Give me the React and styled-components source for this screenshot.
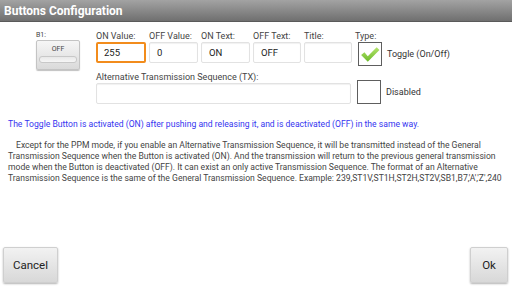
import styled, { createGlobalStyle } from "styled-components";

const GlobalStyle = createGlobalStyle`
  html, body {
    margin: 0;
    padding: 0;
    background: #fff;
    font-family: Roboto, "Noto Sans", sans-serif;
  }
  #root {
    height: 287px;
  }
`;

const Page = styled.div`
  width: 512px;
  height: 287px;
  display: flex;
  flex-direction: column;
  background: #fff;
  overflow: hidden;
`;

const Header = styled.div`
  height: 21px;
  display: flex;
  align-items: center;
  padding-left: 4px;
  background: linear-gradient(#a3a3a3, #6f6f6f);
  border-bottom: 1px solid #5a5a5a;
  color: #fff;
  font-size: 12px;
  font-weight: bold;
`;

const Top = styled.div`
  display: flex;
  padding: 9px 0 0 36px;
`;

const ButtonPreview = styled.div`
  width: 46px;
  display: flex;
  flex-direction: column;
  margin-right: 14px;
`;

const SmallLabel = styled.div`
  font-size: 7px;
  color: #444;
  line-height: 8px;
`;

const OffButton = styled.div`
  margin-top: 1px;
  width: 44px;
  height: 30px;
  box-sizing: border-box;
  border: 1px solid #c4c4c4;
  border-radius: 2px;
  background: linear-gradient(#f6f6f6, #dadada);
  box-shadow: 0 1px 1px rgba(0, 0, 0, 0.25);
  display: flex;
  flex-direction: column;
  align-items: center;
  padding-top: 4px;
  font-size: 7px;
  color: #444;
`;

const Pill = styled.div`
  margin-top: 3px;
  width: 36px;
  height: 5px;
  border-radius: 3px;
  border: 1px solid #c8c8c8;
  background: linear-gradient(#e8e8e8, #f6f6f6);
`;

const Form = styled.div`
  display: flex;
  flex-direction: column;
  gap: 6px;
`;

const Row = styled.div`
  display: flex;
  align-items: ${(p) => p.$align || "flex-end"};
  gap: 3px;
`;

const Field = styled.div`
  display: flex;
  flex-direction: column;
  width: ${(p) => p.$w}px;
`;

const Label = styled.div`
  font-size: 9px;
  color: #444;
  line-height: 10px;
  margin-bottom: 1px;
  white-space: nowrap;
`;

const Input = styled.div`
  height: 21px;
  box-sizing: border-box;
  border: ${(p) => (p.$active ? "2px solid #f28c1c" : "1px solid #e2e2e2")};
  border-radius: 2px;
  box-shadow: ${(p) => (p.$active ? "none" : "inset 0 1px 1px rgba(0,0,0,0.06)")};
  padding-left: ${(p) => (p.$active ? 6 : 7)}px;
  display: flex;
  align-items: center;
  font-size: 9.5px;
  color: #222;
`;

const TypeBox = styled.div`
  display: flex;
  align-items: center;
  margin-left: 3px;
`;

const Check = styled.div`
  width: 24px;
  height: 24px;
  box-sizing: border-box;
  border: 1px solid #5e5e5e;
  background: #fff;
  display: flex;
  align-items: center;
  justify-content: center;
`;

const CheckText = styled.div`
  margin-left: 5px;
  font-size: 9px;
  color: #333;
`;

const Note = styled.div`
  margin: 15px 0 0 8px;
  font-size: 8.6px;
  color: #3535f0;
  line-height: 11px;
`;

const Paragraph = styled.p`
  margin: 10px 0 0 8px;
  width: 500px;
  font-size: 8.6px;
  line-height: 11px;
  color: #444;
  text-indent: 8px;
`;

const Footer = styled.div`
  margin-top: auto;
  display: flex;
  justify-content: space-between;
  padding: 0 4px 4px 3px;
`;

const FooterButton = styled.div`
  width: ${(p) => p.$w}px;
  height: 36px;
  box-sizing: border-box;
  border: 1px solid #cfcfcf;
  border-radius: 2px;
  background: linear-gradient(#f2f2f2, #d8d8d8);
  box-shadow: 0 1px 2px rgba(0, 0, 0, 0.3);
  display: flex;
  align-items: center;
  justify-content: center;
  font-size: 11.5px;
  color: #222;
`;

const CheckMark = () => (
  <svg width="20" height="17" viewBox="0 0 18 15">
    <defs>
      <linearGradient id="g" x1="0" y1="0" x2="0" y2="1">
        <stop offset="0" stopColor="#b4e36c" />
        <stop offset="1" stopColor="#6cbb2a" />
      </linearGradient>
    </defs>
    <path d="M1 8 L4 5.5 L7 9 L15 1 L17.5 3.5 L7 14 Z" fill="url(#g)" />
  </svg>
);

const fields = [
  { label: "ON Value:", value: "255", w: 50, active: true },
  { label: "OFF Value:", value: "0", w: 49 },
  { label: "ON Text:", value: "ON", w: 49 },
  { label: "OFF Text:", value: "OFF", w: 48 },
  { label: "Title:", value: "", w: 48 },
];

export default function App() {
  return (
    <Page>
      <GlobalStyle />
      <Header>Buttons Configuration</Header>
      <Top>
        <ButtonPreview>
          <SmallLabel>B1:</SmallLabel>
          <OffButton>
            OFF
            <Pill />
          </OffButton>
        </ButtonPreview>
        <Form>
          <Row $align="flex-start">
            {fields.map((f) => (
              <Field key={f.label} $w={f.w}>
                <Label>{f.label}</Label>
                <Input $active={f.active}>{f.value}</Input>
              </Field>
            ))}
            <Field $w={110}>
              <Label>Type:</Label>
              <TypeBox>
                <Check>
                  <CheckMark />
                </Check>
                <CheckText>Toggle (On/Off)</CheckText>
              </TypeBox>
            </Field>
          </Row>
          <Row>
            <Field $w={255}>
              <Label>Alternative Transmission Sequence (TX):</Label>
              <Input />
            </Field>
            <TypeBox>
              <Check />
              <CheckText>Disabled</CheckText>
            </TypeBox>
          </Row>
        </Form>
      </Top>
      <Note>
        The Toggle Button is activated (ON) after pushing and releasing it, and is
        deactivated (OFF) in the same way.
      </Note>
      <Paragraph>
        Except for the PPM mode, if you enable an Alternative Transmission Sequence,
        it will be transmitted instead of the General Transmission Sequence when the
        Button is activated (ON). And the transmission will return to the previous
        general transmission mode when the Button is deactivated (OFF). It can exist
        an only active Transmission Sequence. The format of an Alternative
        Transmission Sequence is the same of the General Transmission Sequence.
        Example: 239,ST1V,ST1H,ST2H,ST2V,SB1,B7,'A','Z',240
      </Paragraph>
      <Footer>
        <FooterButton $w={55}>Cancel</FooterButton>
        <FooterButton $w={38}>Ok</FooterButton>
      </Footer>
    </Page>
  );
}
